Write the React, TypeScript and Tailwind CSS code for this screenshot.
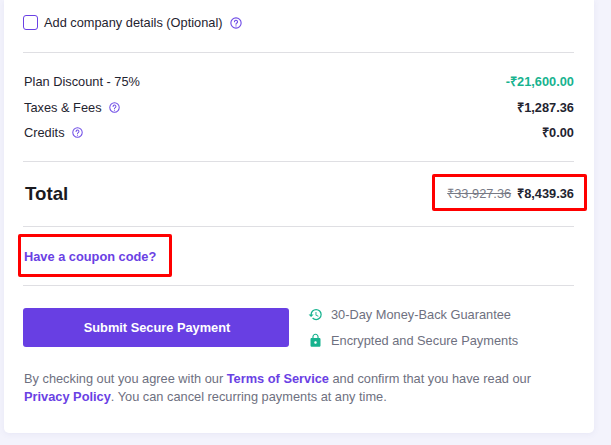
import { MdHistory, MdLock } from "react-icons/md";

function HelpIcon({ size = 12 }: { size?: number }) {
  return (
    <svg width={size} height={size} viewBox="0 0 14 14" fill="none" stroke="#6f4ce6" strokeWidth="1.3" strokeLinecap="round">
      <circle cx="7" cy="7" r="6" />
      <path d="M5.2 5.6a1.8 1.8 0 1 1 2.8 1.5c-.6.4-1 .7-1 1.3" />
      <path d="M7 10.3v.1" />
    </svg>
  );
}

export default function App() {
  return (
    <div className="relative h-[445px] w-[611px] overflow-hidden bg-[#f3f3fc] pl-[4px] font-['Liberation_Sans',Arial,sans-serif] text-[12.8px] text-[#1f2430]">
      <div className="h-[433px] w-[590px] rounded-b-[5px] bg-white px-[19px] pr-[20px] shadow-[0_1px_6px_rgba(90,90,160,0.08)]">
        <div className="flex h-[53px] items-center gap-[6px] border-b border-[#dfdfe3] pb-[7px]">
          <span className="h-[15px] w-[15px] rounded-[3px] border border-[#6a41e4]" />
          <span>Add company details (Optional)</span>
          <span className="ml-[1px] flex"><HelpIcon /></span>
        </div>

        <div className="flex h-[109px] flex-col gap-[6px] border-b border-[#dfdfe3] pl-[1px] pt-[19px] leading-[19.5px]">
          <div className="flex justify-between">
            <span>Plan Discount - 75%</span>
            <span className="font-bold text-[#17b38f]">-₹21,600.00</span>
          </div>
          <div className="flex justify-between">
            <span className="flex items-center gap-[7px]">Taxes &amp; Fees <HelpIcon size={11} /></span>
            <span className="font-bold">₹1,287.36</span>
          </div>
          <div className="flex justify-between">
            <span className="flex items-center gap-[7px]">Credits <HelpIcon size={11} /></span>
            <span className="font-bold">₹0.00</span>
          </div>
        </div>

        <div className="flex h-[65px] items-center justify-between border-b border-[#dfdfe3] pl-[2px]">
          <span className="text-[18.72px] font-bold text-[#1a1a1f]">Total</span>
          <span className="flex gap-[6px] font-bold">
            <span className="font-normal text-[#777a86] line-through">₹33,927.36</span>
            <span>₹8,439.36</span>
          </span>
        </div>

        <div className="flex h-[59px] items-center border-b border-[#dfdfe3] pl-[1px] pt-[1px] font-bold text-[#6a41e4]">Have a coupon code?</div>

        <div className="mt-[19px] flex items-center gap-[20px]">
          <button className="h-[39px] w-[266px] rounded-[3px] bg-[#683fe3] pl-[2px] font-bold text-white">Submit Secure Payment</button>
          <div className="flex flex-col gap-[6.5px] leading-[19.5px] text-[#6e7080]">
            <div className="-ml-[1px] flex items-center gap-[8px]"><MdHistory size={15} className="text-[#17b38f]" />30-Day Money-Back Guarantee</div>
            <div className="-ml-[1px] flex items-center gap-[8px]"><MdLock size={15} className="text-[#17b38f]" />Encrypted and Secure Payments</div>
          </div>
        </div>

        <p className="mt-[19px] pl-[1px] leading-[18.5px] text-[#6e7080]">
          By checking out you agree with our <a className="font-bold text-[#6a41e4]">Terms of Service</a> and confirm that you have read our{" "}
          <a className="font-bold text-[#6a41e4]">Privacy Policy</a>. You can cancel recurring payments at any time.
        </p>
      </div>

      <div className="absolute left-[432px] top-[174px] h-[37px] w-[155px] rounded-[2px] border-[3px] border-[#ff0000]" />
      <div className="absolute left-[18px] top-[234px] h-[43px] w-[154px] rounded-[2px] border-[3px] border-[#ff0000]" />
    </div>
  );
}
